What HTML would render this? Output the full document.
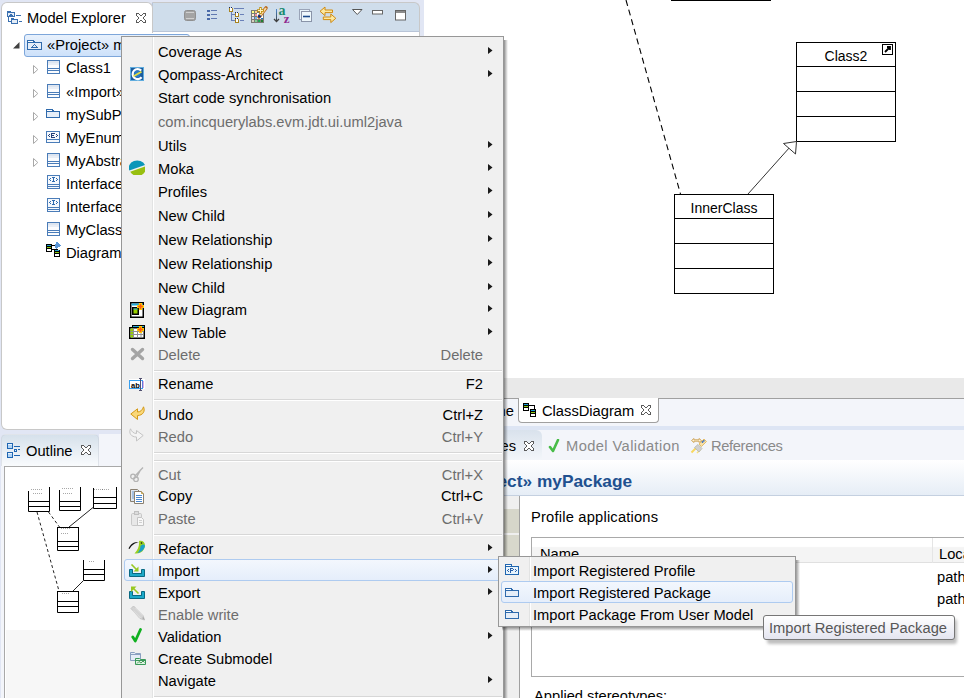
<!DOCTYPE html><html><head><meta charset="utf-8"><style>
*{margin:0;padding:0;box-sizing:border-box}
html,body{width:964px;height:698px;overflow:hidden;background:#fff;font-family:"Liberation Sans", sans-serif;font-size:14.7px}
.t{position:absolute;white-space:nowrap;line-height:17px;height:17px}
.a{position:absolute}
</style></head><body><div style="position:absolute;left:0px;top:0px;width:424px;height:698px;background:#e1e6f4"></div><div style="position:absolute;left:1px;top:31px;width:419px;height:399px;background:#fff;border:1px solid #c8c8c8;border-top:none;border-radius:0 0 0 6px"></div><div style="position:absolute;left:152px;top:2px;width:268px;height:30px;background:#cfddeb;border:1px solid #c8c8c8;border-left:1px solid #b9c5d8;border-bottom:1px solid #b9c5d8;border-radius:0 6px 0 0"></div><div style="position:absolute;left:1px;top:2px;width:152px;height:31px;background:#fff;border:1px solid #c8c8c8;border-bottom:none;border-radius:6px 6px 0 0"></div><div class="t" style="left:27px;top:10px;color:#000;">Model Explorer</div><div style="position:absolute;left:1px;top:466px;width:420px;height:232px;background:#f3f5fa"></div><div style="position:absolute;left:99px;top:434px;width:322px;height:32px;background:#f3f5fa"></div><div style="position:absolute;left:1px;top:434px;width:98px;height:32px;background:linear-gradient(#d6e1eb,#f9fbfd);border-radius:5px 5px 0 0;border:1px solid rgba(200,205,215,.5);border-bottom:none"></div><div class="t" style="left:26px;top:443px;color:#000;">Outline</div><div style="position:absolute;left:4px;top:466px;width:417px;height:232px;background:#fff;border:1px solid #a9a9a9;border-right:none;border-bottom:none"></div><div style="position:absolute;left:6px;top:630px;width:415px;height:68px;background:#f7f7f7"></div><div style="position:absolute;left:424px;top:378px;width:540px;height:20px;background:#e9e9e9"></div><div style="position:absolute;left:504px;top:398px;width:460px;height:1px;background:#a0a0a0"></div><div style="position:absolute;left:504px;top:399px;width:460px;height:27px;background:#f3f5fa"></div><div style="position:absolute;left:504px;top:426px;width:460px;height:4px;background:#dde5f4"></div><div style="position:absolute;left:504px;top:430px;width:460px;height:30px;background:#f3f5fa"></div><div style="position:absolute;left:504px;top:460px;width:460px;height:36px;background:linear-gradient(#fff,#e6edf6);border-bottom:1px solid #c4d0e0"></div><div style="position:absolute;left:504px;top:496px;width:460px;height:202px;background:#fff"></div><div style="position:absolute;left:24px;top:34px;width:166px;height:23px;background:linear-gradient(#e8f1fc,#cde1fa);border:1px solid #7da6da;border-radius:3px"></div><svg class="a" style="left:13px;top:42px" width="7" height="7"><path d="M6.5 0V6.5H0Z" fill="#404040"/></svg><svg class="a" style="left:27px;top:40px" width="15" height="10" shape-rendering="crispEdges"><rect x="0" y="0" width="7" height="1" fill="#2f6aac"/><rect x="0" y="1" width="1" height="1" fill="#2f6aac"/><rect x="1" y="1" width="5" height="1" fill="#ffffff"/><rect x="6" y="1" width="2" height="1" fill="#2f6aac"/><rect x="0" y="2" width="15" height="1" fill="#2f6aac"/><rect x="0" y="3" width="1" height="1" fill="#2f6aac"/><rect x="1" y="3" width="13" height="1" fill="#e6eef8"/><rect x="14" y="3" width="1" height="1" fill="#2f6aac"/><rect x="0" y="4" width="1" height="1" fill="#2f6aac"/><rect x="1" y="4" width="6" height="1" fill="#e6eef8"/><rect x="7" y="4" width="1" height="1" fill="#2f6aac"/><rect x="8" y="4" width="6" height="1" fill="#e6eef8"/><rect x="14" y="4" width="1" height="1" fill="#2f6aac"/><rect x="0" y="5" width="1" height="1" fill="#2f6aac"/><rect x="1" y="5" width="5" height="1" fill="#e6eef8"/><rect x="6" y="5" width="1" height="1" fill="#2f6aac"/><rect x="7" y="5" width="1" height="1" fill="#e6eef8"/><rect x="8" y="5" width="1" height="1" fill="#2f6aac"/><rect x="9" y="5" width="5" height="1" fill="#e6eef8"/><rect x="14" y="5" width="1" height="1" fill="#2f6aac"/><rect x="0" y="6" width="1" height="1" fill="#2f6aac"/><rect x="1" y="6" width="4" height="1" fill="#e6eef8"/><rect x="5" y="6" width="1" height="1" fill="#2f6aac"/><rect x="6" y="6" width="3" height="1" fill="#e6eef8"/><rect x="9" y="6" width="1" height="1" fill="#2f6aac"/><rect x="10" y="6" width="4" height="1" fill="#e6eef8"/><rect x="14" y="6" width="1" height="1" fill="#2f6aac"/><rect x="0" y="7" width="1" height="1" fill="#2f6aac"/><rect x="1" y="7" width="3" height="1" fill="#e6eef8"/><rect x="4" y="7" width="7" height="1" fill="#2f6aac"/><rect x="11" y="7" width="3" height="1" fill="#e6eef8"/><rect x="14" y="7" width="1" height="1" fill="#2f6aac"/><rect x="0" y="8" width="1" height="1" fill="#2f6aac"/><rect x="1" y="8" width="13" height="1" fill="#e6eef8"/><rect x="14" y="8" width="1" height="1" fill="#2f6aac"/><rect x="0" y="9" width="15" height="1" fill="#2f6aac"/></svg><div class="t" style="left:47px;top:37px;color:#000;">&laquo;Project&raquo; myPackage</div><svg class="a" style="left:33px;top:65px" width="6" height="9"><path d="M0.5 0.5L4.8 4.5L0.5 8.5Z" fill="#fff" stroke="#a8a8a8"/></svg><svg class="a" style="left:47px;top:60px" width="13" height="14" shape-rendering="crispEdges"><rect x="0" y="0" width="13" height="1" fill="#4a7cb8"/><rect x="0" y="1" width="1" height="1" fill="#4a7cb8"/><rect x="1" y="1" width="11" height="1" fill="#dde5f0"/><rect x="12" y="1" width="1" height="1" fill="#4a7cb8"/><rect x="0" y="2" width="1" height="1" fill="#4a7cb8"/><rect x="1" y="2" width="11" height="1" fill="#dde5f0"/><rect x="12" y="2" width="1" height="1" fill="#4a7cb8"/><rect x="0" y="3" width="1" height="1" fill="#4a7cb8"/><rect x="1" y="3" width="11" height="1" fill="#e9eef6"/><rect x="12" y="3" width="1" height="1" fill="#4a7cb8"/><rect x="0" y="4" width="1" height="1" fill="#4a7cb8"/><rect x="1" y="4" width="11" height="1" fill="#e9eef6"/><rect x="12" y="4" width="1" height="1" fill="#4a7cb8"/><rect x="0" y="5" width="1" height="1" fill="#4a7cb8"/><rect x="1" y="5" width="11" height="1" fill="#fbfcfe"/><rect x="12" y="5" width="1" height="1" fill="#4a7cb8"/><rect x="0" y="6" width="1" height="1" fill="#4a7cb8"/><rect x="1" y="6" width="11" height="1" fill="#fbfcfe"/><rect x="12" y="6" width="1" height="1" fill="#4a7cb8"/><rect x="0" y="7" width="1" height="1" fill="#4a7cb8"/><rect x="1" y="7" width="11" height="1" fill="#fbfcfe"/><rect x="12" y="7" width="1" height="1" fill="#4a7cb8"/><rect x="0" y="8" width="13" height="1" fill="#4a7cb8"/><rect x="0" y="9" width="1" height="1" fill="#4a7cb8"/><rect x="1" y="9" width="11" height="1" fill="#fbfcfe"/><rect x="12" y="9" width="1" height="1" fill="#4a7cb8"/><rect x="0" y="10" width="13" height="1" fill="#4a7cb8"/><rect x="0" y="11" width="1" height="1" fill="#4a7cb8"/><rect x="1" y="11" width="11" height="1" fill="#fbfcfe"/><rect x="12" y="11" width="1" height="1" fill="#4a7cb8"/><rect x="0" y="12" width="1" height="1" fill="#4a7cb8"/><rect x="1" y="12" width="11" height="1" fill="#fbfcfe"/><rect x="12" y="12" width="1" height="1" fill="#4a7cb8"/><rect x="0" y="13" width="13" height="1" fill="#4a7cb8"/></svg><div class="t" style="left:66px;top:60px;color:#000;">Class1</div><svg class="a" style="left:33px;top:89px" width="6" height="9"><path d="M0.5 0.5L4.8 4.5L0.5 8.5Z" fill="#fff" stroke="#a8a8a8"/></svg><svg class="a" style="left:47px;top:84px" width="13" height="14" shape-rendering="crispEdges"><rect x="0" y="0" width="13" height="1" fill="#4a7cb8"/><rect x="0" y="1" width="1" height="1" fill="#4a7cb8"/><rect x="1" y="1" width="11" height="1" fill="#dde5f0"/><rect x="12" y="1" width="1" height="1" fill="#4a7cb8"/><rect x="0" y="2" width="1" height="1" fill="#4a7cb8"/><rect x="1" y="2" width="11" height="1" fill="#dde5f0"/><rect x="12" y="2" width="1" height="1" fill="#4a7cb8"/><rect x="0" y="3" width="1" height="1" fill="#4a7cb8"/><rect x="1" y="3" width="11" height="1" fill="#e9eef6"/><rect x="12" y="3" width="1" height="1" fill="#4a7cb8"/><rect x="0" y="4" width="1" height="1" fill="#4a7cb8"/><rect x="1" y="4" width="11" height="1" fill="#e9eef6"/><rect x="12" y="4" width="1" height="1" fill="#4a7cb8"/><rect x="0" y="5" width="1" height="1" fill="#4a7cb8"/><rect x="1" y="5" width="11" height="1" fill="#fbfcfe"/><rect x="12" y="5" width="1" height="1" fill="#4a7cb8"/><rect x="0" y="6" width="1" height="1" fill="#4a7cb8"/><rect x="1" y="6" width="11" height="1" fill="#fbfcfe"/><rect x="12" y="6" width="1" height="1" fill="#4a7cb8"/><rect x="0" y="7" width="1" height="1" fill="#4a7cb8"/><rect x="1" y="7" width="11" height="1" fill="#fbfcfe"/><rect x="12" y="7" width="1" height="1" fill="#4a7cb8"/><rect x="0" y="8" width="13" height="1" fill="#4a7cb8"/><rect x="0" y="9" width="1" height="1" fill="#4a7cb8"/><rect x="1" y="9" width="11" height="1" fill="#fbfcfe"/><rect x="12" y="9" width="1" height="1" fill="#4a7cb8"/><rect x="0" y="10" width="13" height="1" fill="#4a7cb8"/><rect x="0" y="11" width="1" height="1" fill="#4a7cb8"/><rect x="1" y="11" width="11" height="1" fill="#fbfcfe"/><rect x="12" y="11" width="1" height="1" fill="#4a7cb8"/><rect x="0" y="12" width="1" height="1" fill="#4a7cb8"/><rect x="1" y="12" width="11" height="1" fill="#fbfcfe"/><rect x="12" y="12" width="1" height="1" fill="#4a7cb8"/><rect x="0" y="13" width="13" height="1" fill="#4a7cb8"/></svg><div class="t" style="left:66px;top:84px;color:#000;">&laquo;Import&raquo; Class</div><svg class="a" style="left:33px;top:112px" width="6" height="9"><path d="M0.5 0.5L4.8 4.5L0.5 8.5Z" fill="#fff" stroke="#a8a8a8"/></svg><svg class="a" style="left:46px;top:109px" width="14" height="9" shape-rendering="crispEdges"><rect x="0" y="0" width="7" height="1" fill="#2f6aac"/><rect x="0" y="1" width="1" height="1" fill="#2f6aac"/><rect x="1" y="1" width="5" height="1" fill="#ffffff"/><rect x="6" y="1" width="2" height="1" fill="#2f6aac"/><rect x="0" y="2" width="14" height="1" fill="#2f6aac"/><rect x="0" y="3" width="1" height="1" fill="#2f6aac"/><rect x="1" y="3" width="12" height="1" fill="#e6eef8"/><rect x="13" y="3" width="1" height="1" fill="#2f6aac"/><rect x="0" y="4" width="1" height="1" fill="#2f6aac"/><rect x="1" y="4" width="12" height="1" fill="#e6eef8"/><rect x="13" y="4" width="1" height="1" fill="#2f6aac"/><rect x="0" y="5" width="1" height="1" fill="#2f6aac"/><rect x="1" y="5" width="12" height="1" fill="#e6eef8"/><rect x="13" y="5" width="1" height="1" fill="#2f6aac"/><rect x="0" y="6" width="1" height="1" fill="#2f6aac"/><rect x="1" y="6" width="12" height="1" fill="#e6eef8"/><rect x="13" y="6" width="1" height="1" fill="#2f6aac"/><rect x="0" y="7" width="1" height="1" fill="#2f6aac"/><rect x="1" y="7" width="12" height="1" fill="#e6eef8"/><rect x="13" y="7" width="1" height="1" fill="#2f6aac"/><rect x="0" y="8" width="14" height="1" fill="#2f6aac"/></svg><div class="t" style="left:66px;top:107px;color:#000;">mySubPackage</div><svg class="a" style="left:33px;top:135px" width="6" height="9"><path d="M0.5 0.5L4.8 4.5L0.5 8.5Z" fill="#fff" stroke="#a8a8a8"/></svg><svg class="a" style="left:46px;top:131px" width="14" height="12" shape-rendering="crispEdges"><rect x="0" y="0" width="14" height="1" fill="#4a7cb8"/><rect x="0" y="1" width="1" height="1" fill="#4a7cb8"/><rect x="1" y="1" width="12" height="1" fill="#f6f9fd"/><rect x="13" y="1" width="1" height="1" fill="#4a7cb8"/><rect x="0" y="2" width="1" height="1" fill="#4a7cb8"/><rect x="1" y="2" width="4" height="1" fill="#f6f9fd"/><rect x="5" y="2" width="4" height="1" fill="#233f78"/><rect x="9" y="2" width="4" height="1" fill="#f6f9fd"/><rect x="13" y="2" width="1" height="1" fill="#4a7cb8"/><rect x="0" y="3" width="1" height="1" fill="#4a7cb8"/><rect x="1" y="3" width="2" height="1" fill="#f6f9fd"/><rect x="3" y="3" width="1" height="1" fill="#233f78"/><rect x="4" y="3" width="1" height="1" fill="#f6f9fd"/><rect x="5" y="3" width="1" height="1" fill="#233f78"/><rect x="6" y="3" width="4" height="1" fill="#f6f9fd"/><rect x="10" y="3" width="1" height="1" fill="#233f78"/><rect x="11" y="3" width="2" height="1" fill="#f6f9fd"/><rect x="13" y="3" width="1" height="1" fill="#4a7cb8"/><rect x="0" y="4" width="1" height="1" fill="#4a7cb8"/><rect x="1" y="4" width="1" height="1" fill="#f6f9fd"/><rect x="2" y="4" width="1" height="1" fill="#233f78"/><rect x="3" y="4" width="2" height="1" fill="#f6f9fd"/><rect x="5" y="4" width="3" height="1" fill="#233f78"/><rect x="8" y="4" width="3" height="1" fill="#f6f9fd"/><rect x="11" y="4" width="1" height="1" fill="#233f78"/><rect x="12" y="4" width="1" height="1" fill="#f6f9fd"/><rect x="13" y="4" width="1" height="1" fill="#4a7cb8"/><rect x="0" y="5" width="1" height="1" fill="#4a7cb8"/><rect x="1" y="5" width="2" height="1" fill="#f6f9fd"/><rect x="3" y="5" width="1" height="1" fill="#233f78"/><rect x="4" y="5" width="1" height="1" fill="#f6f9fd"/><rect x="5" y="5" width="1" height="1" fill="#233f78"/><rect x="6" y="5" width="4" height="1" fill="#f6f9fd"/><rect x="10" y="5" width="1" height="1" fill="#233f78"/><rect x="11" y="5" width="2" height="1" fill="#f6f9fd"/><rect x="13" y="5" width="1" height="1" fill="#4a7cb8"/><rect x="0" y="6" width="1" height="1" fill="#4a7cb8"/><rect x="1" y="6" width="4" height="1" fill="#f6f9fd"/><rect x="5" y="6" width="4" height="1" fill="#233f78"/><rect x="9" y="6" width="4" height="1" fill="#f6f9fd"/><rect x="13" y="6" width="1" height="1" fill="#4a7cb8"/><rect x="0" y="7" width="1" height="1" fill="#4a7cb8"/><rect x="1" y="7" width="12" height="1" fill="#f6f9fd"/><rect x="13" y="7" width="1" height="1" fill="#4a7cb8"/><rect x="0" y="8" width="14" height="1" fill="#4a7cb8"/><rect x="0" y="9" width="1" height="1" fill="#4a7cb8"/><rect x="1" y="9" width="12" height="1" fill="#f6f9fd"/><rect x="13" y="9" width="1" height="1" fill="#4a7cb8"/><rect x="0" y="10" width="1" height="1" fill="#4a7cb8"/><rect x="1" y="10" width="12" height="1" fill="#f6f9fd"/><rect x="13" y="10" width="1" height="1" fill="#4a7cb8"/><rect x="0" y="11" width="14" height="1" fill="#4a7cb8"/></svg><div class="t" style="left:66px;top:130px;color:#000;">MyEnumeration</div><svg class="a" style="left:33px;top:158px" width="6" height="9"><path d="M0.5 0.5L4.8 4.5L0.5 8.5Z" fill="#fff" stroke="#a8a8a8"/></svg><svg class="a" style="left:47px;top:153px" width="13" height="14" shape-rendering="crispEdges"><rect x="0" y="0" width="13" height="1" fill="#4a7cb8"/><rect x="0" y="1" width="1" height="1" fill="#4a7cb8"/><rect x="1" y="1" width="11" height="1" fill="#dde5f0"/><rect x="12" y="1" width="1" height="1" fill="#4a7cb8"/><rect x="0" y="2" width="1" height="1" fill="#4a7cb8"/><rect x="1" y="2" width="11" height="1" fill="#dde5f0"/><rect x="12" y="2" width="1" height="1" fill="#4a7cb8"/><rect x="0" y="3" width="1" height="1" fill="#4a7cb8"/><rect x="1" y="3" width="11" height="1" fill="#e9eef6"/><rect x="12" y="3" width="1" height="1" fill="#4a7cb8"/><rect x="0" y="4" width="1" height="1" fill="#4a7cb8"/><rect x="1" y="4" width="11" height="1" fill="#e9eef6"/><rect x="12" y="4" width="1" height="1" fill="#4a7cb8"/><rect x="0" y="5" width="1" height="1" fill="#4a7cb8"/><rect x="1" y="5" width="11" height="1" fill="#fbfcfe"/><rect x="12" y="5" width="1" height="1" fill="#4a7cb8"/><rect x="0" y="6" width="1" height="1" fill="#4a7cb8"/><rect x="1" y="6" width="11" height="1" fill="#fbfcfe"/><rect x="12" y="6" width="1" height="1" fill="#4a7cb8"/><rect x="0" y="7" width="1" height="1" fill="#4a7cb8"/><rect x="1" y="7" width="11" height="1" fill="#fbfcfe"/><rect x="12" y="7" width="1" height="1" fill="#4a7cb8"/><rect x="0" y="8" width="13" height="1" fill="#4a7cb8"/><rect x="0" y="9" width="1" height="1" fill="#4a7cb8"/><rect x="1" y="9" width="11" height="1" fill="#fbfcfe"/><rect x="12" y="9" width="1" height="1" fill="#4a7cb8"/><rect x="0" y="10" width="13" height="1" fill="#4a7cb8"/><rect x="0" y="11" width="1" height="1" fill="#4a7cb8"/><rect x="1" y="11" width="11" height="1" fill="#fbfcfe"/><rect x="12" y="11" width="1" height="1" fill="#4a7cb8"/><rect x="0" y="12" width="1" height="1" fill="#4a7cb8"/><rect x="1" y="12" width="11" height="1" fill="#fbfcfe"/><rect x="12" y="12" width="1" height="1" fill="#4a7cb8"/><rect x="0" y="13" width="13" height="1" fill="#4a7cb8"/></svg><div class="t" style="left:66px;top:153px;color:#000;">MyAbstractClass</div><svg class="a" style="left:47px;top:175px" width="13" height="14" shape-rendering="crispEdges"><rect x="0" y="0" width="13" height="1" fill="#4a7cb8"/><rect x="0" y="1" width="1" height="1" fill="#4a7cb8"/><rect x="1" y="1" width="11" height="1" fill="#f6f9fd"/><rect x="12" y="1" width="1" height="1" fill="#4a7cb8"/><rect x="0" y="2" width="1" height="1" fill="#4a7cb8"/><rect x="1" y="2" width="4" height="1" fill="#f6f9fd"/><rect x="5" y="2" width="3" height="1" fill="#2d6ab0"/><rect x="8" y="2" width="4" height="1" fill="#f6f9fd"/><rect x="12" y="2" width="1" height="1" fill="#4a7cb8"/><rect x="0" y="3" width="1" height="1" fill="#4a7cb8"/><rect x="1" y="3" width="2" height="1" fill="#f6f9fd"/><rect x="3" y="3" width="1" height="1" fill="#2d6ab0"/><rect x="4" y="3" width="2" height="1" fill="#f6f9fd"/><rect x="6" y="3" width="1" height="1" fill="#2d6ab0"/><rect x="7" y="3" width="2" height="1" fill="#f6f9fd"/><rect x="9" y="3" width="1" height="1" fill="#2d6ab0"/><rect x="10" y="3" width="2" height="1" fill="#f6f9fd"/><rect x="12" y="3" width="1" height="1" fill="#4a7cb8"/><rect x="0" y="4" width="1" height="1" fill="#4a7cb8"/><rect x="1" y="4" width="1" height="1" fill="#f6f9fd"/><rect x="2" y="4" width="1" height="1" fill="#2d6ab0"/><rect x="3" y="4" width="3" height="1" fill="#f6f9fd"/><rect x="6" y="4" width="1" height="1" fill="#2d6ab0"/><rect x="7" y="4" width="3" height="1" fill="#f6f9fd"/><rect x="10" y="4" width="1" height="1" fill="#2d6ab0"/><rect x="11" y="4" width="1" height="1" fill="#f6f9fd"/><rect x="12" y="4" width="1" height="1" fill="#4a7cb8"/><rect x="0" y="5" width="1" height="1" fill="#4a7cb8"/><rect x="1" y="5" width="2" height="1" fill="#f6f9fd"/><rect x="3" y="5" width="1" height="1" fill="#2d6ab0"/><rect x="4" y="5" width="2" height="1" fill="#f6f9fd"/><rect x="6" y="5" width="1" height="1" fill="#2d6ab0"/><rect x="7" y="5" width="2" height="1" fill="#f6f9fd"/><rect x="9" y="5" width="1" height="1" fill="#2d6ab0"/><rect x="10" y="5" width="2" height="1" fill="#f6f9fd"/><rect x="12" y="5" width="1" height="1" fill="#4a7cb8"/><rect x="0" y="6" width="1" height="1" fill="#4a7cb8"/><rect x="1" y="6" width="4" height="1" fill="#f6f9fd"/><rect x="5" y="6" width="3" height="1" fill="#2d6ab0"/><rect x="8" y="6" width="4" height="1" fill="#f6f9fd"/><rect x="12" y="6" width="1" height="1" fill="#4a7cb8"/><rect x="0" y="7" width="1" height="1" fill="#4a7cb8"/><rect x="1" y="7" width="11" height="1" fill="#f6f9fd"/><rect x="12" y="7" width="1" height="1" fill="#4a7cb8"/><rect x="0" y="8" width="1" height="1" fill="#4a7cb8"/><rect x="1" y="8" width="11" height="1" fill="#f6f9fd"/><rect x="12" y="8" width="1" height="1" fill="#4a7cb8"/><rect x="0" y="9" width="13" height="1" fill="#4a7cb8"/><rect x="0" y="10" width="1" height="1" fill="#4a7cb8"/><rect x="1" y="10" width="11" height="1" fill="#f6f9fd"/><rect x="12" y="10" width="1" height="1" fill="#4a7cb8"/><rect x="0" y="11" width="13" height="1" fill="#4a7cb8"/><rect x="0" y="12" width="1" height="1" fill="#4a7cb8"/><rect x="1" y="12" width="11" height="1" fill="#f6f9fd"/><rect x="12" y="12" width="1" height="1" fill="#4a7cb8"/><rect x="0" y="13" width="13" height="1" fill="#4a7cb8"/></svg><div class="t" style="left:66px;top:176px;color:#000;">Interface1</div><svg class="a" style="left:47px;top:198px" width="13" height="14" shape-rendering="crispEdges"><rect x="0" y="0" width="13" height="1" fill="#4a7cb8"/><rect x="0" y="1" width="1" height="1" fill="#4a7cb8"/><rect x="1" y="1" width="11" height="1" fill="#f6f9fd"/><rect x="12" y="1" width="1" height="1" fill="#4a7cb8"/><rect x="0" y="2" width="1" height="1" fill="#4a7cb8"/><rect x="1" y="2" width="4" height="1" fill="#f6f9fd"/><rect x="5" y="2" width="3" height="1" fill="#2d6ab0"/><rect x="8" y="2" width="4" height="1" fill="#f6f9fd"/><rect x="12" y="2" width="1" height="1" fill="#4a7cb8"/><rect x="0" y="3" width="1" height="1" fill="#4a7cb8"/><rect x="1" y="3" width="2" height="1" fill="#f6f9fd"/><rect x="3" y="3" width="1" height="1" fill="#2d6ab0"/><rect x="4" y="3" width="2" height="1" fill="#f6f9fd"/><rect x="6" y="3" width="1" height="1" fill="#2d6ab0"/><rect x="7" y="3" width="2" height="1" fill="#f6f9fd"/><rect x="9" y="3" width="1" height="1" fill="#2d6ab0"/><rect x="10" y="3" width="2" height="1" fill="#f6f9fd"/><rect x="12" y="3" width="1" height="1" fill="#4a7cb8"/><rect x="0" y="4" width="1" height="1" fill="#4a7cb8"/><rect x="1" y="4" width="1" height="1" fill="#f6f9fd"/><rect x="2" y="4" width="1" height="1" fill="#2d6ab0"/><rect x="3" y="4" width="3" height="1" fill="#f6f9fd"/><rect x="6" y="4" width="1" height="1" fill="#2d6ab0"/><rect x="7" y="4" width="3" height="1" fill="#f6f9fd"/><rect x="10" y="4" width="1" height="1" fill="#2d6ab0"/><rect x="11" y="4" width="1" height="1" fill="#f6f9fd"/><rect x="12" y="4" width="1" height="1" fill="#4a7cb8"/><rect x="0" y="5" width="1" height="1" fill="#4a7cb8"/><rect x="1" y="5" width="2" height="1" fill="#f6f9fd"/><rect x="3" y="5" width="1" height="1" fill="#2d6ab0"/><rect x="4" y="5" width="2" height="1" fill="#f6f9fd"/><rect x="6" y="5" width="1" height="1" fill="#2d6ab0"/><rect x="7" y="5" width="2" height="1" fill="#f6f9fd"/><rect x="9" y="5" width="1" height="1" fill="#2d6ab0"/><rect x="10" y="5" width="2" height="1" fill="#f6f9fd"/><rect x="12" y="5" width="1" height="1" fill="#4a7cb8"/><rect x="0" y="6" width="1" height="1" fill="#4a7cb8"/><rect x="1" y="6" width="4" height="1" fill="#f6f9fd"/><rect x="5" y="6" width="3" height="1" fill="#2d6ab0"/><rect x="8" y="6" width="4" height="1" fill="#f6f9fd"/><rect x="12" y="6" width="1" height="1" fill="#4a7cb8"/><rect x="0" y="7" width="1" height="1" fill="#4a7cb8"/><rect x="1" y="7" width="11" height="1" fill="#f6f9fd"/><rect x="12" y="7" width="1" height="1" fill="#4a7cb8"/><rect x="0" y="8" width="1" height="1" fill="#4a7cb8"/><rect x="1" y="8" width="11" height="1" fill="#f6f9fd"/><rect x="12" y="8" width="1" height="1" fill="#4a7cb8"/><rect x="0" y="9" width="13" height="1" fill="#4a7cb8"/><rect x="0" y="10" width="1" height="1" fill="#4a7cb8"/><rect x="1" y="10" width="11" height="1" fill="#f6f9fd"/><rect x="12" y="10" width="1" height="1" fill="#4a7cb8"/><rect x="0" y="11" width="13" height="1" fill="#4a7cb8"/><rect x="0" y="12" width="1" height="1" fill="#4a7cb8"/><rect x="1" y="12" width="11" height="1" fill="#f6f9fd"/><rect x="12" y="12" width="1" height="1" fill="#4a7cb8"/><rect x="0" y="13" width="13" height="1" fill="#4a7cb8"/></svg><div class="t" style="left:66px;top:199px;color:#000;">Interface2</div><svg class="a" style="left:47px;top:222px" width="13" height="14" shape-rendering="crispEdges"><rect x="0" y="0" width="13" height="1" fill="#4a7cb8"/><rect x="0" y="1" width="1" height="1" fill="#4a7cb8"/><rect x="1" y="1" width="11" height="1" fill="#dde5f0"/><rect x="12" y="1" width="1" height="1" fill="#4a7cb8"/><rect x="0" y="2" width="1" height="1" fill="#4a7cb8"/><rect x="1" y="2" width="11" height="1" fill="#dde5f0"/><rect x="12" y="2" width="1" height="1" fill="#4a7cb8"/><rect x="0" y="3" width="1" height="1" fill="#4a7cb8"/><rect x="1" y="3" width="11" height="1" fill="#e9eef6"/><rect x="12" y="3" width="1" height="1" fill="#4a7cb8"/><rect x="0" y="4" width="1" height="1" fill="#4a7cb8"/><rect x="1" y="4" width="11" height="1" fill="#e9eef6"/><rect x="12" y="4" width="1" height="1" fill="#4a7cb8"/><rect x="0" y="5" width="1" height="1" fill="#4a7cb8"/><rect x="1" y="5" width="11" height="1" fill="#fbfcfe"/><rect x="12" y="5" width="1" height="1" fill="#4a7cb8"/><rect x="0" y="6" width="1" height="1" fill="#4a7cb8"/><rect x="1" y="6" width="11" height="1" fill="#fbfcfe"/><rect x="12" y="6" width="1" height="1" fill="#4a7cb8"/><rect x="0" y="7" width="1" height="1" fill="#4a7cb8"/><rect x="1" y="7" width="11" height="1" fill="#fbfcfe"/><rect x="12" y="7" width="1" height="1" fill="#4a7cb8"/><rect x="0" y="8" width="13" height="1" fill="#4a7cb8"/><rect x="0" y="9" width="1" height="1" fill="#4a7cb8"/><rect x="1" y="9" width="11" height="1" fill="#fbfcfe"/><rect x="12" y="9" width="1" height="1" fill="#4a7cb8"/><rect x="0" y="10" width="13" height="1" fill="#4a7cb8"/><rect x="0" y="11" width="1" height="1" fill="#4a7cb8"/><rect x="1" y="11" width="11" height="1" fill="#fbfcfe"/><rect x="12" y="11" width="1" height="1" fill="#4a7cb8"/><rect x="0" y="12" width="1" height="1" fill="#4a7cb8"/><rect x="1" y="12" width="11" height="1" fill="#fbfcfe"/><rect x="12" y="12" width="1" height="1" fill="#4a7cb8"/><rect x="0" y="13" width="13" height="1" fill="#4a7cb8"/></svg><div class="t" style="left:66px;top:222px;color:#000;">MyClass</div><svg class="a" style="left:46px;top:242px" width="16" height="15" shape-rendering="crispEdges"><rect x="10" y="0" width="2" height="1" fill="#5a96d8"/><rect x="10" y="1" width="3" height="1" fill="#5a96d8"/><rect x="0" y="2" width="6" height="1" fill="#000"/><rect x="9" y="2" width="5" height="1" fill="#5a96d8"/><rect x="0" y="3" width="1" height="1" fill="#000"/><rect x="1" y="3" width="4" height="1" fill="#1aa0d0"/><rect x="5" y="3" width="4" height="1" fill="#000"/><rect x="9" y="3" width="6" height="1" fill="#5a96d8"/><rect x="0" y="4" width="6" height="1" fill="#000"/><rect x="9" y="4" width="5" height="1" fill="#5a96d8"/><rect x="0" y="5" width="1" height="1" fill="#000"/><rect x="1" y="5" width="4" height="1" fill="#8ccc10"/><rect x="5" y="5" width="1" height="1" fill="#000"/><rect x="9" y="5" width="3" height="1" fill="#5a96d8"/><rect x="0" y="6" width="6" height="1" fill="#000"/><rect x="10" y="6" width="1" height="1" fill="#5a96d8"/><rect x="0" y="7" width="1" height="1" fill="#000"/><rect x="1" y="7" width="4" height="1" fill="#fff"/><rect x="5" y="7" width="7" height="1" fill="#000"/><rect x="0" y="8" width="1" height="1" fill="#000"/><rect x="1" y="8" width="4" height="1" fill="#fff"/><rect x="5" y="8" width="1" height="1" fill="#000"/><rect x="8" y="8" width="1" height="1" fill="#000"/><rect x="9" y="8" width="4" height="1" fill="#1aa0d0"/><rect x="13" y="8" width="1" height="1" fill="#000"/><rect x="0" y="9" width="6" height="1" fill="#000"/><rect x="8" y="9" width="6" height="1" fill="#000"/><rect x="8" y="10" width="1" height="1" fill="#000"/><rect x="9" y="10" width="4" height="1" fill="#8ccc10"/><rect x="13" y="10" width="1" height="1" fill="#000"/><rect x="8" y="11" width="6" height="1" fill="#000"/><rect x="8" y="12" width="1" height="1" fill="#000"/><rect x="9" y="12" width="4" height="1" fill="#fff"/><rect x="13" y="12" width="1" height="1" fill="#000"/><rect x="8" y="13" width="1" height="1" fill="#000"/><rect x="9" y="13" width="4" height="1" fill="#fff"/><rect x="13" y="13" width="1" height="1" fill="#000"/><rect x="8" y="14" width="6" height="1" fill="#000"/></svg><div class="t" style="left:66px;top:245px;color:#000;">Diagram</div><svg class="a" style="left:5px;top:11px" width="17" height="13" shape-rendering="crispEdges"><rect x="2" y="0" width="4" height="1" fill="#3a70b0"/><rect x="2" y="1" width="8" height="1" fill="#3a70b0"/><rect x="2" y="2" width="1" height="1" fill="#3a70b0"/><rect x="3" y="2" width="6" height="1" fill="#e4edf7"/><rect x="9" y="2" width="1" height="1" fill="#3a70b0"/><rect x="2" y="3" width="1" height="1" fill="#3a70b0"/><rect x="3" y="3" width="2" height="1" fill="#e4edf7"/><rect x="5" y="3" width="2" height="1" fill="#3a70b0"/><rect x="7" y="3" width="2" height="1" fill="#e4edf7"/><rect x="9" y="3" width="1" height="1" fill="#3a70b0"/><rect x="2" y="4" width="1" height="1" fill="#3a70b0"/><rect x="3" y="4" width="1" height="1" fill="#e4edf7"/><rect x="4" y="4" width="4" height="1" fill="#3a70b0"/><rect x="8" y="4" width="1" height="1" fill="#e4edf7"/><rect x="9" y="4" width="1" height="1" fill="#3a70b0"/><rect x="11" y="4" width="5" height="1" fill="#3a70b0"/><rect x="2" y="5" width="8" height="1" fill="#3a70b0"/><rect x="3" y="6" width="1" height="1" fill="#3a70b0"/><rect x="3" y="7" width="1" height="1" fill="#3a70b0"/><rect x="6" y="7" width="3" height="1" fill="#3a70b0"/><rect x="3" y="8" width="1" height="1" fill="#3a70b0"/><rect x="6" y="8" width="7" height="1" fill="#3a70b0"/><rect x="3" y="9" width="1" height="1" fill="#3a70b0"/><rect x="6" y="9" width="1" height="1" fill="#3a70b0"/><rect x="7" y="9" width="5" height="1" fill="#e4edf7"/><rect x="12" y="9" width="1" height="1" fill="#3a70b0"/><rect x="3" y="10" width="4" height="1" fill="#3a70b0"/><rect x="7" y="10" width="5" height="1" fill="#e4edf7"/><rect x="12" y="10" width="1" height="1" fill="#3a70b0"/><rect x="14" y="10" width="3" height="1" fill="#3a70b0"/><rect x="6" y="11" width="1" height="1" fill="#3a70b0"/><rect x="7" y="11" width="5" height="1" fill="#e4edf7"/><rect x="12" y="11" width="1" height="1" fill="#3a70b0"/><rect x="6" y="12" width="7" height="1" fill="#3a70b0"/></svg><svg class="a" style="left:136px;top:13px" width="10" height="10" shape-rendering="crispEdges"><rect x="0" y="0" width="3" height="1" fill="#5a5a5a"/><rect x="7" y="0" width="3" height="1" fill="#5a5a5a"/><rect x="0" y="1" width="1" height="1" fill="#5a5a5a"/><rect x="1" y="1" width="2" height="1" fill="#ffffff"/><rect x="3" y="1" width="1" height="1" fill="#5a5a5a"/><rect x="6" y="1" width="1" height="1" fill="#5a5a5a"/><rect x="7" y="1" width="2" height="1" fill="#ffffff"/><rect x="9" y="1" width="1" height="1" fill="#5a5a5a"/><rect x="0" y="2" width="1" height="1" fill="#5a5a5a"/><rect x="1" y="2" width="3" height="1" fill="#ffffff"/><rect x="4" y="2" width="2" height="1" fill="#5a5a5a"/><rect x="6" y="2" width="3" height="1" fill="#ffffff"/><rect x="9" y="2" width="1" height="1" fill="#5a5a5a"/><rect x="1" y="3" width="1" height="1" fill="#5a5a5a"/><rect x="2" y="3" width="6" height="1" fill="#ffffff"/><rect x="8" y="3" width="1" height="1" fill="#5a5a5a"/><rect x="2" y="4" width="1" height="1" fill="#5a5a5a"/><rect x="3" y="4" width="4" height="1" fill="#ffffff"/><rect x="7" y="4" width="1" height="1" fill="#5a5a5a"/><rect x="2" y="5" width="1" height="1" fill="#5a5a5a"/><rect x="3" y="5" width="4" height="1" fill="#ffffff"/><rect x="7" y="5" width="1" height="1" fill="#5a5a5a"/><rect x="1" y="6" width="1" height="1" fill="#5a5a5a"/><rect x="2" y="6" width="6" height="1" fill="#ffffff"/><rect x="8" y="6" width="1" height="1" fill="#5a5a5a"/><rect x="0" y="7" width="1" height="1" fill="#5a5a5a"/><rect x="1" y="7" width="3" height="1" fill="#ffffff"/><rect x="4" y="7" width="2" height="1" fill="#5a5a5a"/><rect x="6" y="7" width="3" height="1" fill="#ffffff"/><rect x="9" y="7" width="1" height="1" fill="#5a5a5a"/><rect x="0" y="8" width="1" height="1" fill="#5a5a5a"/><rect x="1" y="8" width="2" height="1" fill="#ffffff"/><rect x="3" y="8" width="1" height="1" fill="#5a5a5a"/><rect x="6" y="8" width="1" height="1" fill="#5a5a5a"/><rect x="7" y="8" width="2" height="1" fill="#ffffff"/><rect x="9" y="8" width="1" height="1" fill="#5a5a5a"/><rect x="0" y="9" width="3" height="1" fill="#5a5a5a"/><rect x="7" y="9" width="3" height="1" fill="#5a5a5a"/></svg><svg class="a" style="left:184px;top:10px" width="12" height="11"><rect x="0.5" y="0.5" width="11" height="10" rx="2" fill="#a4a4a4" stroke="#909090"/><path d="M2 2.5h8M2 8.5h8" stroke="#d0d0d0"/></svg><svg class="a" style="left:207px;top:10px" width="10" height="10" shape-rendering="crispEdges"><rect x="0" y="0" width="3" height="1" fill="#4a6aa8"/><rect x="4" y="0" width="6" height="1" fill="#6078b0"/><rect x="0" y="1" width="3" height="1" fill="#4a6aa8"/><rect x="0" y="4" width="3" height="1" fill="#4a6aa8"/><rect x="4" y="4" width="6" height="1" fill="#6078b0"/><rect x="0" y="5" width="3" height="1" fill="#4a6aa8"/><rect x="0" y="8" width="3" height="1" fill="#4a6aa8"/><rect x="4" y="8" width="6" height="1" fill="#6078b0"/><rect x="0" y="9" width="3" height="1" fill="#4a6aa8"/></svg><svg class="a" style="left:226px;top:5px" width="20" height="18" shape-rendering="crispEdges"><rect x="3" y="2" width="1" height="1" fill="#1a2a60"/><rect x="5" y="2" width="1" height="1" fill="#1a2a60"/><rect x="3" y="3" width="1" height="1" fill="#a88420"/><rect x="4" y="3" width="2" height="1" fill="#ffffff"/><rect x="6" y="3" width="1" height="1" fill="#a88420"/><rect x="8" y="3" width="10" height="1" fill="#6a80b8"/><rect x="3" y="4" width="1" height="1" fill="#a88420"/><rect x="4" y="4" width="2" height="1" fill="#ffffff"/><rect x="6" y="4" width="1" height="1" fill="#a88420"/><rect x="3" y="5" width="1" height="1" fill="#a88420"/><rect x="4" y="5" width="2" height="1" fill="#ffffff"/><rect x="6" y="5" width="1" height="1" fill="#a88420"/><rect x="3" y="6" width="4" height="1" fill="#a88420"/><rect x="5" y="7" width="1" height="1" fill="#6a80b8"/><rect x="9" y="7" width="1" height="1" fill="#1a2a60"/><rect x="11" y="7" width="1" height="1" fill="#1a2a60"/><rect x="5" y="8" width="1" height="1" fill="#6a80b8"/><rect x="9" y="8" width="1" height="1" fill="#a88420"/><rect x="10" y="8" width="2" height="1" fill="#ffffff"/><rect x="12" y="8" width="1" height="1" fill="#a88420"/><rect x="5" y="9" width="4" height="1" fill="#6a80b8"/><rect x="9" y="9" width="1" height="1" fill="#a88420"/><rect x="10" y="9" width="2" height="1" fill="#ffffff"/><rect x="12" y="9" width="1" height="1" fill="#a88420"/><rect x="14" y="9" width="4" height="1" fill="#6a80b8"/><rect x="5" y="10" width="1" height="1" fill="#6a80b8"/><rect x="9" y="10" width="1" height="1" fill="#a88420"/><rect x="10" y="10" width="2" height="1" fill="#ffffff"/><rect x="12" y="10" width="1" height="1" fill="#a88420"/><rect x="5" y="11" width="1" height="1" fill="#6a80b8"/><rect x="9" y="11" width="4" height="1" fill="#a88420"/><rect x="5" y="12" width="1" height="1" fill="#6a80b8"/><rect x="5" y="13" width="1" height="1" fill="#6a80b8"/><rect x="9" y="13" width="1" height="1" fill="#1a2a60"/><rect x="11" y="13" width="1" height="1" fill="#1a2a60"/><rect x="5" y="14" width="1" height="1" fill="#6a80b8"/><rect x="9" y="14" width="1" height="1" fill="#a88420"/><rect x="10" y="14" width="2" height="1" fill="#ffffff"/><rect x="12" y="14" width="1" height="1" fill="#a88420"/><rect x="5" y="15" width="4" height="1" fill="#6a80b8"/><rect x="9" y="15" width="1" height="1" fill="#a88420"/><rect x="10" y="15" width="2" height="1" fill="#ffffff"/><rect x="12" y="15" width="1" height="1" fill="#a88420"/><rect x="14" y="15" width="4" height="1" fill="#6a80b8"/><rect x="9" y="16" width="1" height="1" fill="#a88420"/><rect x="10" y="16" width="2" height="1" fill="#ffffff"/><rect x="12" y="16" width="1" height="1" fill="#a88420"/><rect x="9" y="17" width="4" height="1" fill="#a88420"/></svg><svg class="a" style="left:249px;top:5px" width="20" height="20" shape-rendering="crispEdges"><rect x="2" y="5" width="13" height="13" fill="#7c7c74"/><rect x="3" y="6" width="2" height="2" fill="#ffff80"/><rect x="6" y="6" width="2" height="2" fill="#ffd090"/><rect x="3" y="9" width="2" height="2" fill="#fff0d8"/><rect x="6" y="9" width="2" height="2" fill="#f090a0"/><rect x="3" y="12" width="2" height="2" fill="#d8d8ff"/><rect x="6" y="12" width="2" height="2" fill="#70b8f0"/><rect x="3" y="15" width="2" height="2" fill="#d8d0c0"/><rect x="6" y="15" width="2" height="2" fill="#80d090"/><rect x="9" y="15" width="2" height="2" fill="#20a050"/><rect x="12" y="15" width="2" height="2" fill="#208030"/><rect x="8" y="8" width="6" height="6" fill="#fff"/><rect x="12" y="13" width="2" height="1" fill="#2070c0"/></svg><svg class="a" style="left:249px;top:5px" width="20" height="20"><path d="M10 12 L17 3" stroke="#b86a20" stroke-width="3.6" stroke-linecap="round"/><path d="M10 12 L17 3" stroke="#f8d8a0" stroke-width="2"/><path d="M9.5 9.5 q-1 2.5 0 3 q2 1 3 -1.5z" fill="#0a2a80"/><path d="M11.5 2v7M8 5.5h7" stroke="#c09010" stroke-width="2.4"/><path d="M11.5 3v5M9 5.5h5" stroke="#fff4c0" stroke-width="1"/></svg><svg class="a" style="left:271px;top:5px" width="20" height="20"><defs><linearGradient id="ag" x1="0" y1="0" x2="0" y2="1"><stop offset="0" stop-color="#4a8ad0"/><stop offset="1" stop-color="#404040"/></linearGradient></defs><rect x="5" y="4" width="1" height="12" fill="url(#ag)"/><path d="M3 14L5.5 16.5L8 14" stroke="#404040" stroke-width="1.3" fill="none"/><text x="7.5" y="10" font-size="14" font-weight="bold" font-family="Liberation Serif" fill="#1a8a70">a</text><text x="12.8" y="18" font-size="13" font-weight="bold" font-family="Liberation Serif" fill="#902a90">z</text></svg><svg class="a" style="left:296px;top:5px" width="20" height="20"><rect x="3.5" y="4.5" width="10" height="10" fill="#e8f4fa" stroke="#9aa4b8"/><rect x="5.5" y="6.5" width="10" height="10" fill="#eef8fc" stroke="#8a94a8"/><path d="M7 11.5h7" stroke="#1a4a8a" stroke-width="1.6"/></svg><svg class="a" style="left:318px;top:5px" width="20" height="20"><path d="M2 6.3L7 2V5H14.5V7.6H7V10.6Z" fill="#fce8a0" stroke="#d08a10" stroke-width="1" stroke-linejoin="round"/><path d="M17.8 13.3L12.8 9V12H5.3V14.6H12.8V17.6Z" fill="#fce8a0" stroke="#d08a10" stroke-width="1" stroke-linejoin="round"/></svg><svg class="a" style="left:352px;top:9px" width="11" height="7"><path d="M0.5 0.5H10L5.25 5.5Z" fill="#fff" stroke="#555" stroke-linejoin="round"/></svg><svg class="a" style="left:372px;top:10px" width="11" height="5"><rect x="0.5" y="0.5" width="10" height="3.5" fill="#fff" stroke="#666"/></svg><svg class="a" style="left:395px;top:10px" width="11" height="11"><rect x="0.5" y="0.5" width="10" height="9.5" fill="#fff" stroke="#666"/><path d="M0.5 2h10" stroke="#666" stroke-width="1.5"/></svg><svg class="a" style="left:7px;top:443px" width="15" height="15" shape-rendering="crispEdges"><rect x="0" y="0" width="6" height="1" fill="#1f66b2"/><rect x="0" y="1" width="1" height="1" fill="#1f66b2"/><rect x="1" y="1" width="4" height="1" fill="#e8f2fc"/><rect x="5" y="1" width="1" height="1" fill="#1f66b2"/><rect x="0" y="2" width="1" height="1" fill="#1f66b2"/><rect x="1" y="2" width="4" height="1" fill="#b0d4f6"/><rect x="5" y="2" width="1" height="1" fill="#1f66b2"/><rect x="0" y="3" width="1" height="1" fill="#1f66b2"/><rect x="1" y="3" width="4" height="1" fill="#b0d4f6"/><rect x="5" y="3" width="1" height="1" fill="#1f66b2"/><rect x="7" y="3" width="6" height="1" fill="#1f66b2"/><rect x="0" y="4" width="1" height="1" fill="#1f66b2"/><rect x="1" y="4" width="4" height="1" fill="#b0d4f6"/><rect x="5" y="4" width="1" height="1" fill="#1f66b2"/><rect x="0" y="5" width="6" height="1" fill="#1f66b2"/><rect x="7" y="6" width="3" height="1" fill="#1f66b2"/><rect x="11" y="6" width="2" height="1" fill="#1f66b2"/><rect x="7" y="7" width="1" height="1" fill="#1f66b2"/><rect x="8" y="7" width="1" height="1" fill="#e8f2fc"/><rect x="9" y="7" width="1" height="1" fill="#1f66b2"/><rect x="7" y="8" width="3" height="1" fill="#1f66b2"/><rect x="0" y="9" width="6" height="1" fill="#1f66b2"/><rect x="0" y="10" width="1" height="1" fill="#1f66b2"/><rect x="1" y="10" width="4" height="1" fill="#e8f2fc"/><rect x="5" y="10" width="1" height="1" fill="#1f66b2"/><rect x="0" y="11" width="1" height="1" fill="#1f66b2"/><rect x="1" y="11" width="4" height="1" fill="#b0d4f6"/><rect x="5" y="11" width="1" height="1" fill="#1f66b2"/><rect x="0" y="12" width="1" height="1" fill="#1f66b2"/><rect x="1" y="12" width="4" height="1" fill="#b0d4f6"/><rect x="5" y="12" width="1" height="1" fill="#1f66b2"/><rect x="7" y="12" width="6" height="1" fill="#1f66b2"/><rect x="0" y="13" width="1" height="1" fill="#1f66b2"/><rect x="1" y="13" width="4" height="1" fill="#b0d4f6"/><rect x="5" y="13" width="1" height="1" fill="#1f66b2"/><rect x="0" y="14" width="6" height="1" fill="#1f66b2"/></svg><svg class="a" style="left:81px;top:445px" width="10" height="10" shape-rendering="crispEdges"><rect x="0" y="0" width="3" height="1" fill="#5a5a5a"/><rect x="7" y="0" width="3" height="1" fill="#5a5a5a"/><rect x="0" y="1" width="1" height="1" fill="#5a5a5a"/><rect x="1" y="1" width="2" height="1" fill="#ffffff"/><rect x="3" y="1" width="1" height="1" fill="#5a5a5a"/><rect x="6" y="1" width="1" height="1" fill="#5a5a5a"/><rect x="7" y="1" width="2" height="1" fill="#ffffff"/><rect x="9" y="1" width="1" height="1" fill="#5a5a5a"/><rect x="0" y="2" width="1" height="1" fill="#5a5a5a"/><rect x="1" y="2" width="3" height="1" fill="#ffffff"/><rect x="4" y="2" width="2" height="1" fill="#5a5a5a"/><rect x="6" y="2" width="3" height="1" fill="#ffffff"/><rect x="9" y="2" width="1" height="1" fill="#5a5a5a"/><rect x="1" y="3" width="1" height="1" fill="#5a5a5a"/><rect x="2" y="3" width="6" height="1" fill="#ffffff"/><rect x="8" y="3" width="1" height="1" fill="#5a5a5a"/><rect x="2" y="4" width="1" height="1" fill="#5a5a5a"/><rect x="3" y="4" width="4" height="1" fill="#ffffff"/><rect x="7" y="4" width="1" height="1" fill="#5a5a5a"/><rect x="2" y="5" width="1" height="1" fill="#5a5a5a"/><rect x="3" y="5" width="4" height="1" fill="#ffffff"/><rect x="7" y="5" width="1" height="1" fill="#5a5a5a"/><rect x="1" y="6" width="1" height="1" fill="#5a5a5a"/><rect x="2" y="6" width="6" height="1" fill="#ffffff"/><rect x="8" y="6" width="1" height="1" fill="#5a5a5a"/><rect x="0" y="7" width="1" height="1" fill="#5a5a5a"/><rect x="1" y="7" width="3" height="1" fill="#ffffff"/><rect x="4" y="7" width="2" height="1" fill="#5a5a5a"/><rect x="6" y="7" width="3" height="1" fill="#ffffff"/><rect x="9" y="7" width="1" height="1" fill="#5a5a5a"/><rect x="0" y="8" width="1" height="1" fill="#5a5a5a"/><rect x="1" y="8" width="2" height="1" fill="#ffffff"/><rect x="3" y="8" width="1" height="1" fill="#5a5a5a"/><rect x="6" y="8" width="1" height="1" fill="#5a5a5a"/><rect x="7" y="8" width="2" height="1" fill="#ffffff"/><rect x="9" y="8" width="1" height="1" fill="#5a5a5a"/><rect x="0" y="9" width="3" height="1" fill="#5a5a5a"/><rect x="7" y="9" width="3" height="1" fill="#5a5a5a"/></svg><svg class="a" style="left:0;top:0" width="130" height="630"><path d="M28.5 491 V511.5 H49.5 V487" stroke="#000" fill="none"/><path d="M28 501.5 H50" stroke="#000"/><path d="M28 506.5 H50" stroke="#000"/><path d="M59.5 490 V510.5 H80.5 V487" stroke="#000" fill="none"/><path d="M59 501.5 H81" stroke="#000"/><path d="M59 506.5 H81" stroke="#000"/><path d="M93.5 488 V508.5 H116.5 V487" stroke="#000" fill="none"/><path d="M93 497.5 H117" stroke="#000"/><path d="M93 503.5 H117" stroke="#000"/><path d="M57.5 527 V550.5 H78.5 V527" stroke="#000" fill="none"/><path d="M57 527.5 H79" stroke="#000"/><path d="M57 541.5 H79" stroke="#000"/><path d="M57 546.5 H79" stroke="#000"/><path d="M83.5 560 V580.5 H104.5 V560" stroke="#000" fill="none"/><path d="M83 569.5 H105" stroke="#000"/><path d="M83 574.5 H105" stroke="#000"/><path d="M57.5 591 V612.5 H78.5 V591" stroke="#000" fill="none"/><path d="M57 591.5 H79" stroke="#000"/><path d="M57 601.5 H79" stroke="#000"/><path d="M57 606.5 H79" stroke="#000"/><path d="M37 512 L59 591" stroke="#222" stroke-dasharray="3 2.5" fill="none"/><path d="M48.5 512 L59.5 527" stroke="#222" stroke-dasharray="3 2.5" fill="none"/><path d="M69 527 L93 507.5" stroke="#222" fill="none"/><path d="M73 591 L83 581" stroke="#222" fill="none"/><path d="M31 489.5H42" stroke="#404040" stroke-dasharray="1 1" opacity=".45"/><path d="M33 493.5H42" stroke="#404040" stroke-dasharray="1 1" opacity=".45"/><path d="M62 488.5H73" stroke="#404040" stroke-dasharray="1 1" opacity=".45"/><path d="M63 493.5H72" stroke="#404040" stroke-dasharray="1 1" opacity=".45"/><path d="M94 489.5H104" stroke="#404040" stroke-dasharray="1 1" opacity=".45"/><path d="M102 489.5H110" stroke="#404040" stroke-dasharray="1 1" opacity=".45"/><path d="M61 528.5H70" stroke="#404040" stroke-dasharray="1 1" opacity=".45"/><path d="M61 533.5H69" stroke="#404040" stroke-dasharray="1 1" opacity=".45"/><path d="M89 561.5H94" stroke="#404040" stroke-dasharray="1 1" opacity=".45"/><path d="M62 593.5H70" stroke="#404040" stroke-dasharray="1 1" opacity=".45"/></svg><svg class="a" style="left:0;top:0" width="964" height="378"><line x1="671" y1="0.5" x2="771" y2="0.5" stroke="#000" stroke-width="1"/><line x1="626" y1="0" x2="680.5" y2="194" stroke="#000" stroke-width="1.1" stroke-dasharray="6 4"/><rect x="796.5" y="42.5" width="99" height="99" fill="#fff" stroke="#000"/><line x1="796" y1="66.5" x2="896" y2="66.5" stroke="#000"/><line x1="796" y1="91.5" x2="896" y2="91.5" stroke="#000"/><line x1="796" y1="116.5" x2="896" y2="116.5" stroke="#000"/><rect x="882.5" y="44.5" width="10" height="10" fill="#fff" stroke="#000"/><path d="M885 52L890 47M887 47h3v3" stroke="#000" stroke-width="1.8" fill="none"/><rect x="674.5" y="194.5" width="99" height="99" fill="#fff" stroke="#000"/><line x1="674" y1="218.5" x2="774" y2="218.5" stroke="#000"/><line x1="674" y1="243.5" x2="774" y2="243.5" stroke="#000"/><line x1="674" y1="268.5" x2="774" y2="268.5" stroke="#000"/><line x1="748" y1="194" x2="790" y2="147" stroke="#333"/><path d="M796.5 141.5L783.5 143.5L795.5 154Z" fill="#fff" stroke="#333"/></svg><div class="t" style="left:796px;width:100px;text-align:center;top:48px;font-size:14px;color:#000">Class2</div><div class="t" style="left:674px;width:100px;text-align:center;top:200px;font-size:14px;color:#000">InnerClass</div><div class="t" style="left:414px;width:100px;text-align:right;top:403px">Welcome</div><div style="position:absolute;left:518px;top:398px;width:141px;height:25px;background:#fff;border:1px solid #a0a0a0;border-top:none;border-radius:0 0 4px 4px"></div><svg class="a" style="left:523px;top:403px" width="14" height="14" shape-rendering="crispEdges"><rect x="0" y="0" width="6" height="1" fill="#000"/><rect x="0" y="1" width="1" height="1" fill="#000"/><rect x="1" y="1" width="4" height="1" fill="#1aa0d0"/><rect x="5" y="1" width="1" height="1" fill="#000"/><rect x="0" y="2" width="12" height="1" fill="#000"/><rect x="0" y="3" width="1" height="1" fill="#000"/><rect x="1" y="3" width="4" height="1" fill="#8ccc10"/><rect x="5" y="3" width="1" height="1" fill="#000"/><rect x="11" y="3" width="1" height="1" fill="#000"/><rect x="0" y="4" width="6" height="1" fill="#000"/><rect x="11" y="4" width="1" height="1" fill="#000"/><rect x="0" y="5" width="1" height="1" fill="#000"/><rect x="1" y="5" width="4" height="1" fill="#fff"/><rect x="5" y="5" width="1" height="1" fill="#000"/><rect x="11" y="5" width="1" height="1" fill="#000"/><rect x="0" y="6" width="1" height="1" fill="#000"/><rect x="1" y="6" width="4" height="1" fill="#fff"/><rect x="5" y="6" width="1" height="1" fill="#000"/><rect x="7" y="6" width="6" height="1" fill="#000"/><rect x="0" y="7" width="6" height="1" fill="#000"/><rect x="7" y="7" width="1" height="1" fill="#000"/><rect x="8" y="7" width="4" height="1" fill="#1aa0d0"/><rect x="12" y="7" width="1" height="1" fill="#000"/><rect x="7" y="8" width="6" height="1" fill="#000"/><rect x="7" y="9" width="1" height="1" fill="#000"/><rect x="8" y="9" width="4" height="1" fill="#8ccc10"/><rect x="12" y="9" width="1" height="1" fill="#000"/><rect x="7" y="10" width="6" height="1" fill="#000"/><rect x="7" y="11" width="1" height="1" fill="#000"/><rect x="8" y="11" width="4" height="1" fill="#fff"/><rect x="12" y="11" width="1" height="1" fill="#000"/><rect x="7" y="12" width="1" height="1" fill="#000"/><rect x="8" y="12" width="4" height="1" fill="#fff"/><rect x="12" y="12" width="1" height="1" fill="#000"/><rect x="7" y="13" width="6" height="1" fill="#000"/></svg><div class="t" style="left:542px;top:403px;color:#000;">ClassDiagram</div><svg class="a" style="left:641px;top:405px" width="10" height="10" shape-rendering="crispEdges"><rect x="0" y="0" width="3" height="1" fill="#5a5a5a"/><rect x="7" y="0" width="3" height="1" fill="#5a5a5a"/><rect x="0" y="1" width="1" height="1" fill="#5a5a5a"/><rect x="1" y="1" width="2" height="1" fill="#ffffff"/><rect x="3" y="1" width="1" height="1" fill="#5a5a5a"/><rect x="6" y="1" width="1" height="1" fill="#5a5a5a"/><rect x="7" y="1" width="2" height="1" fill="#ffffff"/><rect x="9" y="1" width="1" height="1" fill="#5a5a5a"/><rect x="0" y="2" width="1" height="1" fill="#5a5a5a"/><rect x="1" y="2" width="3" height="1" fill="#ffffff"/><rect x="4" y="2" width="2" height="1" fill="#5a5a5a"/><rect x="6" y="2" width="3" height="1" fill="#ffffff"/><rect x="9" y="2" width="1" height="1" fill="#5a5a5a"/><rect x="1" y="3" width="1" height="1" fill="#5a5a5a"/><rect x="2" y="3" width="6" height="1" fill="#ffffff"/><rect x="8" y="3" width="1" height="1" fill="#5a5a5a"/><rect x="2" y="4" width="1" height="1" fill="#5a5a5a"/><rect x="3" y="4" width="4" height="1" fill="#ffffff"/><rect x="7" y="4" width="1" height="1" fill="#5a5a5a"/><rect x="2" y="5" width="1" height="1" fill="#5a5a5a"/><rect x="3" y="5" width="4" height="1" fill="#ffffff"/><rect x="7" y="5" width="1" height="1" fill="#5a5a5a"/><rect x="1" y="6" width="1" height="1" fill="#5a5a5a"/><rect x="2" y="6" width="6" height="1" fill="#ffffff"/><rect x="8" y="6" width="1" height="1" fill="#5a5a5a"/><rect x="0" y="7" width="1" height="1" fill="#5a5a5a"/><rect x="1" y="7" width="3" height="1" fill="#ffffff"/><rect x="4" y="7" width="2" height="1" fill="#5a5a5a"/><rect x="6" y="7" width="3" height="1" fill="#ffffff"/><rect x="9" y="7" width="1" height="1" fill="#5a5a5a"/><rect x="0" y="8" width="1" height="1" fill="#5a5a5a"/><rect x="1" y="8" width="2" height="1" fill="#ffffff"/><rect x="3" y="8" width="1" height="1" fill="#5a5a5a"/><rect x="6" y="8" width="1" height="1" fill="#5a5a5a"/><rect x="7" y="8" width="2" height="1" fill="#ffffff"/><rect x="9" y="8" width="1" height="1" fill="#5a5a5a"/><rect x="0" y="9" width="3" height="1" fill="#5a5a5a"/><rect x="7" y="9" width="3" height="1" fill="#5a5a5a"/></svg><div style="position:absolute;left:504px;top:430px;width:38px;height:30px;background:linear-gradient(#d9e2ec,#f3f6fa);border-radius:0 6px 0 0"></div><div class="t" style="left:416px;width:100px;text-align:right;top:438px">Properties</div><svg class="a" style="left:524px;top:441px" width="10" height="10" shape-rendering="crispEdges"><rect x="0" y="0" width="3" height="1" fill="#5a5a5a"/><rect x="7" y="0" width="3" height="1" fill="#5a5a5a"/><rect x="0" y="1" width="1" height="1" fill="#5a5a5a"/><rect x="1" y="1" width="2" height="1" fill="#ffffff"/><rect x="3" y="1" width="1" height="1" fill="#5a5a5a"/><rect x="6" y="1" width="1" height="1" fill="#5a5a5a"/><rect x="7" y="1" width="2" height="1" fill="#ffffff"/><rect x="9" y="1" width="1" height="1" fill="#5a5a5a"/><rect x="0" y="2" width="1" height="1" fill="#5a5a5a"/><rect x="1" y="2" width="3" height="1" fill="#ffffff"/><rect x="4" y="2" width="2" height="1" fill="#5a5a5a"/><rect x="6" y="2" width="3" height="1" fill="#ffffff"/><rect x="9" y="2" width="1" height="1" fill="#5a5a5a"/><rect x="1" y="3" width="1" height="1" fill="#5a5a5a"/><rect x="2" y="3" width="6" height="1" fill="#ffffff"/><rect x="8" y="3" width="1" height="1" fill="#5a5a5a"/><rect x="2" y="4" width="1" height="1" fill="#5a5a5a"/><rect x="3" y="4" width="4" height="1" fill="#ffffff"/><rect x="7" y="4" width="1" height="1" fill="#5a5a5a"/><rect x="2" y="5" width="1" height="1" fill="#5a5a5a"/><rect x="3" y="5" width="4" height="1" fill="#ffffff"/><rect x="7" y="5" width="1" height="1" fill="#5a5a5a"/><rect x="1" y="6" width="1" height="1" fill="#5a5a5a"/><rect x="2" y="6" width="6" height="1" fill="#ffffff"/><rect x="8" y="6" width="1" height="1" fill="#5a5a5a"/><rect x="0" y="7" width="1" height="1" fill="#5a5a5a"/><rect x="1" y="7" width="3" height="1" fill="#ffffff"/><rect x="4" y="7" width="2" height="1" fill="#5a5a5a"/><rect x="6" y="7" width="3" height="1" fill="#ffffff"/><rect x="9" y="7" width="1" height="1" fill="#5a5a5a"/><rect x="0" y="8" width="1" height="1" fill="#5a5a5a"/><rect x="1" y="8" width="2" height="1" fill="#ffffff"/><rect x="3" y="8" width="1" height="1" fill="#5a5a5a"/><rect x="6" y="8" width="1" height="1" fill="#5a5a5a"/><rect x="7" y="8" width="2" height="1" fill="#ffffff"/><rect x="9" y="8" width="1" height="1" fill="#5a5a5a"/><rect x="0" y="9" width="3" height="1" fill="#5a5a5a"/><rect x="7" y="9" width="3" height="1" fill="#5a5a5a"/></svg><svg class="a" style="left:548px;top:439px" width="12" height="14"><path d="M2 8L5 12L10 1" stroke="#48bc48" stroke-width="2.6" fill="none" stroke-linecap="round" stroke-linejoin="round"/></svg><div class="t" style="left:566px;top:438px;color:#8a8a8a;letter-spacing:0.4px">Model Validation</div><svg class="a" style="left:690px;top:437px" width="18" height="17"><path d="M1.5 3.5L4 1.5V2.8H9V1.5L11.5 3.5L9 5.5V4.2H4V5.5Z" fill="#fdf3d8" stroke="#d0a860" stroke-width="1" stroke-linejoin="round"/><path d="M1.5 15.5L7 10" stroke="#f8d860" stroke-width="2"/><path d="M7 16L10 13" stroke="#f8e080" stroke-width="1.6"/><path d="M4.5 10.5L8 7.5L12 11.5L9 15Z" fill="#d0d0d0" stroke="#b8b8a8" stroke-width=".8"/><path d="M9 7L14 2L16.5 4.5L11.5 9.5Z" fill="#f8e0a8" stroke="#e0b860" stroke-width=".9"/><circle cx="12.5" cy="5" r=".9" fill="#3a70c0"/><circle cx="13.8" cy="3.8" r=".9" fill="#3a70c0"/></svg><div class="t" style="left:711px;top:438px;color:#8a8a8a;letter-spacing:-0.35px">References</div><div class="t" style="left:400px;width:132px;text-align:right;top:471px;height:20px;line-height:20px;font-size:17.3px;font-weight:bold;color:#21508f">&laquo;Project&raquo;</div><div class="t" style="left:537px;top:471px;height:20px;line-height:20px;font-size:17.3px;font-weight:bold;color:#21508f">myPackage</div><div style="position:absolute;left:504px;top:496px;width:16px;height:202px;background:#efefef;border-right:1px solid #a0a0a0"></div><div style="position:absolute;left:504px;top:509px;width:15px;height:24px;background:#d6d6ca"></div><div style="position:absolute;left:504px;top:535px;width:15px;height:25px;background:#d8d8cc"></div><div class="t" style="left:531px;top:509px;color:#000;letter-spacing:0.2px">Profile applications</div><div style="position:absolute;left:531px;top:537px;width:433px;height:140px;background:#fff;border:1px solid #a9a9a9;border-right:none"></div><div style="position:absolute;left:532px;top:538px;width:432px;height:25px;background:linear-gradient(#fff 0,#fff 35%,#f4f4f4 40%,#f4f4f4);border-bottom:1px solid #e0e0e0"></div><div style="position:absolute;left:932px;top:538px;width:1px;height:25px;background:#e5e5e5"></div><div class="t" style="left:540px;top:546px;color:#000;">Name</div><div class="t" style="left:939px;top:546px;color:#000;">Location</div><div class="t" style="left:937px;top:569px;color:#000;">path</div><div class="t" style="left:937px;top:591px;color:#000;">path</div><div class="t" style="left:534px;top:688px;color:#000;">Applied stereotypes:</div><div style="position:absolute;left:504px;top:40px;width:4px;height:658px;background:linear-gradient(90deg,rgba(0,0,0,.45),rgba(0,0,0,.25) 40%,rgba(0,0,0,0))"></div><div style="position:absolute;left:121px;top:36px;width:383px;height:670px;background:#f0f0f0;border:1px solid #979797"></div><div style="position:absolute;left:152px;top:37px;width:1px;height:661px;background:#e2e3e3"></div><div style="position:absolute;left:153px;top:37px;width:1px;height:661px;background:#fff"></div><div style="position:absolute;left:154px;top:370px;width:348px;height:1px;background:#d7d7d7"></div><div style="position:absolute;left:154px;top:371px;width:348px;height:1px;background:#fff"></div><div style="position:absolute;left:154px;top:399px;width:348px;height:1px;background:#d7d7d7"></div><div style="position:absolute;left:154px;top:400px;width:348px;height:1px;background:#fff"></div><div style="position:absolute;left:154px;top:452px;width:348px;height:1px;background:#d7d7d7"></div><div style="position:absolute;left:154px;top:453px;width:348px;height:1px;background:#fff"></div><div style="position:absolute;left:154px;top:460px;width:348px;height:1px;background:#d7d7d7"></div><div style="position:absolute;left:154px;top:461px;width:348px;height:1px;background:#fff"></div><div style="position:absolute;left:154px;top:534px;width:348px;height:1px;background:#d7d7d7"></div><div style="position:absolute;left:154px;top:535px;width:348px;height:1px;background:#fff"></div><div style="position:absolute;left:154px;top:696px;width:348px;height:1px;background:#d7d7d7"></div><div style="position:absolute;left:154px;top:697px;width:348px;height:1px;background:#fff"></div><div style="position:absolute;left:124px;top:559px;width:378px;height:22px;background:linear-gradient(#f3f7fd,#e5eefb);border:1px solid #aecbf0;border-radius:3px"></div><div style="position:absolute;left:152px;top:560px;width:1px;height:20px;background:rgba(200,210,225,.5)"></div><div class="t" style="left:158px;top:44px;color:#000;">Coverage As</div><svg class="a" style="left:488px;top:47px" width="5" height="8"><path d="M0 0L4.5 3.5L0 7Z" fill="#1a1a1a"/></svg><div class="t" style="left:158px;top:67px;color:#000;">Qompass-Architect</div><svg class="a" style="left:488px;top:70px" width="5" height="8"><path d="M0 0L4.5 3.5L0 7Z" fill="#1a1a1a"/></svg><svg class="a" style="left:130px;top:67px" width="14" height="14"><rect x="0" y="0" width="14" height="14" fill="#1b5c9e"/><rect x="0.5" y="0.5" width="13" height="13" fill="none" stroke="#70c0ee" stroke-opacity=".8"/><path d="M11.2 3.6 A5 5 0 1 0 11.6 10.2" stroke="#fff" stroke-width="2.2" fill="none"/><ellipse cx="7.2" cy="7" rx="3" ry="3.4" fill="#2a7cc8"/><path d="M3.5 9.2 L11.5 4.8" stroke="#e4dc40" stroke-width="1.8"/></svg><div class="t" style="left:158px;top:90px;color:#000;">Start code synchronisation</div><div class="t" style="left:158px;top:114px;color:#6d6d6d;">com.incquerylabs.evm.jdt.ui.uml2java</div><div class="t" style="left:158px;top:138px;color:#000;">Utils</div><svg class="a" style="left:488px;top:141px" width="5" height="8"><path d="M0 0L4.5 3.5L0 7Z" fill="#1a1a1a"/></svg><div class="t" style="left:158px;top:161px;color:#000;">Moka</div><svg class="a" style="left:488px;top:164px" width="5" height="8"><path d="M0 0L4.5 3.5L0 7Z" fill="#1a1a1a"/></svg><svg class="a" style="left:129px;top:160px" width="16" height="15"><path d="M0.4 10.5 A8 6.8 0 0 1 16 5 Z" fill="#0a96b8"/><path d="M1.2 11.8 L16 6.4 A8 6.8 0 0 1 1.2 11.8 Z" fill="#98bf10"/></svg><div class="t" style="left:158px;top:184px;color:#000;">Profiles</div><svg class="a" style="left:488px;top:187px" width="5" height="8"><path d="M0 0L4.5 3.5L0 7Z" fill="#1a1a1a"/></svg><div class="t" style="left:158px;top:208px;color:#000;">New Child</div><svg class="a" style="left:488px;top:211px" width="5" height="8"><path d="M0 0L4.5 3.5L0 7Z" fill="#1a1a1a"/></svg><div class="t" style="left:158px;top:232px;color:#000;">New Relationship</div><svg class="a" style="left:488px;top:235px" width="5" height="8"><path d="M0 0L4.5 3.5L0 7Z" fill="#1a1a1a"/></svg><div class="t" style="left:158px;top:256px;color:#000;">New Relationship</div><svg class="a" style="left:488px;top:259px" width="5" height="8"><path d="M0 0L4.5 3.5L0 7Z" fill="#1a1a1a"/></svg><div class="t" style="left:158px;top:280px;color:#000;">New Child</div><svg class="a" style="left:488px;top:283px" width="5" height="8"><path d="M0 0L4.5 3.5L0 7Z" fill="#1a1a1a"/></svg><div class="t" style="left:158px;top:302px;color:#000;">New Diagram</div><svg class="a" style="left:488px;top:305px" width="5" height="8"><path d="M0 0L4.5 3.5L0 7Z" fill="#1a1a1a"/></svg><svg class="a" style="left:130px;top:302px" width="14" height="16"><rect x="0.75" y="0.75" width="12.5" height="14.5" fill="#fff" stroke="#000" stroke-width="1.5"/><rect x="1.5" y="1.5" width="11" height="2" fill="#20a8d8"/><rect x="2.75" y="5.75" width="5.5" height="6.5" fill="#98d000" stroke="#000" stroke-width="1.5"/><rect x="3.5" y="6.5" width="4" height="1" fill="#20a8d8"/><path d="M10.5 1v7M7 4.5h7" stroke="#ffd000" stroke-width="3.2"/><path d="M10.5 2v5M8 4.5h5" stroke="#ff5a10" stroke-width="1.6"/></svg><div class="t" style="left:158px;top:325px;color:#000;">New Table</div><svg class="a" style="left:488px;top:328px" width="5" height="8"><path d="M0 0L4.5 3.5L0 7Z" fill="#1a1a1a"/></svg><svg class="a" style="left:129px;top:325px" width="16" height="14"><rect x="3.5" y="0.5" width="12" height="3" fill="#20a8d8" stroke="#000"/><rect x="0.75" y="2.75" width="14.5" height="10.5" fill="#fff" stroke="#000" stroke-width="1.5"/><rect x="1.5" y="3.5" width="2.5" height="9" fill="#98d000"/><path d="M1.5 6.5h13M1.5 9.5h13M4.5 3.5v9M8.5 3.5v9M12 3.5v9" stroke="#909090"/><path d="M11.5 1v7M8 4.5h7" stroke="#ffd000" stroke-width="3.2"/><path d="M11.5 2v5M9 4.5h5" stroke="#ff5a10" stroke-width="1.6"/></svg><div class="t" style="left:158px;top:347px;color:#6d6d6d;">Delete</div><div class="t" style="left:382px;width:101px;text-align:right;top:347px;color:#6d6d6d">Delete</div><svg class="a" style="left:130px;top:347px" width="15" height="14"><path d="M2.5 2.5L12.5 11.5M12.5 2.5L2.5 11.5" stroke="#a4a4a4" stroke-width="3.4" stroke-linecap="round"/></svg><div class="t" style="left:158px;top:376px;color:#000;">Rename</div><div class="t" style="left:382px;width:101px;text-align:right;top:376px;color:#000">F2</div><svg class="a" style="left:129px;top:376px" width="16" height="16"><rect x="0" y="3" width="16" height="10" fill="#fff"/><rect x="0.5" y="4.5" width="13" height="8" fill="#fff" stroke="#38a0f0"/><text x="2" y="11.5" font-size="7.5" font-weight="bold" font-family="Liberation Sans" fill="#000">ab</text><path d="M11.5 2.5v12M10 2.5h3M10 14.5h3" stroke="#505070" stroke-width="1"/><path d="M14 5v7" stroke="#a040c0" stroke-width=".8"/></svg><div class="t" style="left:158px;top:407px;color:#000;">Undo</div><div class="t" style="left:382px;width:101px;text-align:right;top:407px;color:#000">Ctrl+Z</div><svg class="a" style="left:130px;top:406px" width="15" height="15"><path d="M13.5 0.8 C15.5 5 13 9.5 7.5 9.5 L7.5 13.5 L0.8 8 L7.5 2.8 L7.5 6 C10.5 6 12.5 4 13.5 0.8Z" fill="#fad878" stroke="#d49a18" stroke-width="1" stroke-linejoin="round"/></svg><div class="t" style="left:158px;top:429px;color:#6d6d6d;">Redo</div><div class="t" style="left:382px;width:101px;text-align:right;top:429px;color:#6d6d6d">Ctrl+Y</div><svg class="a" style="left:129px;top:428px" width="15" height="14"><path d="M1.5 0.8 C-0.5 5 2 9 7.5 9 L7.5 13 L14.2 7.5 L7.5 2.5 L7.5 5.5 C4.5 5.5 2.5 3.5 1.5 0.8Z" fill="#f4f4f4" stroke="#c4c4c4" stroke-width="1" stroke-linejoin="round"/></svg><div class="t" style="left:158px;top:467px;color:#6d6d6d;">Cut</div><div class="t" style="left:382px;width:101px;text-align:right;top:467px;color:#6d6d6d">Ctrl+X</div><svg class="a" style="left:130px;top:467px" width="14" height="15"><path d="M5 9L13 0.5M6.5 10.5L10.5 3" stroke="#b4b4b4" stroke-width="1.3"/><circle cx="3" cy="9.5" r="2.3" fill="none" stroke="#b4b4b4" stroke-width="1.3"/><circle cx="6" cy="12.3" r="2.3" fill="none" stroke="#b4b4b4" stroke-width="1.3"/></svg><div class="t" style="left:158px;top:488px;color:#000;">Copy</div><div class="t" style="left:382px;width:101px;text-align:right;top:488px;color:#000">Ctrl+C</div><svg class="a" style="left:130px;top:489px" width="14" height="15"><path d="M0.5 0.5h7l2 2v10h-9z" fill="#dfe6f0" stroke="#8a8070"/><path d="M2 3h4M2 5h4M2 7h4M2 9h4" stroke="#6a9ad0"/><path d="M4.5 2.5h7l2 2v10h-9z" fill="#fff" stroke="#8a8070"/><path d="M11.5 2.5v2h2" fill="#e8d8a0" stroke="#c0a050"/><path d="M6 6.5h6M6 8.5h6M6 10.5h6M6 12.5h6" stroke="#4a88d0"/></svg><div class="t" style="left:158px;top:511px;color:#6d6d6d;">Paste</div><div class="t" style="left:382px;width:101px;text-align:right;top:511px;color:#6d6d6d">Ctrl+V</div><svg class="a" style="left:131px;top:511px" width="13" height="15"><rect x="0.5" y="2.5" width="10" height="12" rx="1.2" fill="#e8e8e8" stroke="#c8c8c8"/><rect x="3.5" y="0.5" width="4" height="3" fill="#dcdcdc" stroke="#c0c0c0"/><path d="M6.5 6.5h4l2 2v6h-6z" fill="#f8f8f8" stroke="#c4c4c4"/><path d="M8 9.5h3M8 11.5h3" stroke="#d0d0d0"/></svg><div class="t" style="left:158px;top:541px;color:#000;">Refactor</div><svg class="a" style="left:488px;top:544px" width="5" height="8"><path d="M0 0L4.5 3.5L0 7Z" fill="#1a1a1a"/></svg><svg class="a" style="left:128px;top:540px" width="18" height="14"><path d="M0.5 8.5 C3 3 7 1.5 11 2.5 C8 2.5 4 4.5 1.5 9Z" fill="#111"/><path d="M11 1 C16 0 18.5 4 16 9 C14 13 10 14 6.5 13.5 C10 10 11.5 6 11 1Z" fill="#9ad020"/><path d="M12.5 6 C14.5 4 16.5 4 17 6 C16 10 13 12.5 9.5 13 C11.5 10.5 12.5 8.5 12.5 6Z" fill="#1aa0c8"/><circle cx="13.5" cy="3" r="0.8" fill="#111"/></svg><div class="t" style="left:158px;top:563px;color:#000;">Import</div><svg class="a" style="left:488px;top:566px" width="5" height="8"><path d="M0 0L4.5 3.5L0 7Z" fill="#1a1a1a"/></svg><svg class="a" style="left:129px;top:564px" width="16" height="13"><path d="M0.5 5.5h3v4h9v-4h3v7h-15z" fill="#1ca8c8" stroke="#0a6a84"/><path d="M3.5 9.5h9" stroke="#0a6a84"/><path d="M2.5 0.5L8.5 6.5" stroke="#98c820" stroke-width="1.6"/><path d="M9.5 2.5v5h-5z" fill="#98c820"/></svg><div class="t" style="left:158px;top:585px;color:#000;">Export</div><svg class="a" style="left:488px;top:588px" width="5" height="8"><path d="M0 0L4.5 3.5L0 7Z" fill="#1a1a1a"/></svg><svg class="a" style="left:129px;top:586px" width="16" height="13"><path d="M0.5 5.5h3v4h9v-4h3v7h-15z" fill="#1ca8c8" stroke="#0a6a84"/><path d="M3.5 9.5h9" stroke="#0a6a84"/><path d="M9.5 7.5L3.5 1.5" stroke="#98c820" stroke-width="1.6"/><path d="M2 0.5h5.5l-5.5 5.5z" fill="#98c820"/></svg><div class="t" style="left:158px;top:607px;color:#6d6d6d;">Enable write</div><svg class="a" style="left:130px;top:605px" width="15" height="16"><path d="M1 3.5 L3.5 1 L13 10.5 L14.5 15 L10 13.5 Z" fill="#d4d4d4" stroke="#c4c4c4" stroke-linejoin="round"/><path d="M3 5.5L10.5 13M5.5 3L13 10.5" stroke="#e8e8e8" stroke-width=".8"/><path d="M12 13 L14.5 15 L13.5 12z" fill="#a8a8a8"/></svg><div class="t" style="left:158px;top:629px;color:#000;">Validation</div><svg class="a" style="left:488px;top:632px" width="5" height="8"><path d="M0 0L4.5 3.5L0 7Z" fill="#1a1a1a"/></svg><svg class="a" style="left:131px;top:628px" width="11" height="15"><path d="M1.8 9 L4.3 13 L9.5 1.5" stroke="#10b020" stroke-width="2.8" fill="none" stroke-linecap="round" stroke-linejoin="round"/></svg><div class="t" style="left:158px;top:651px;color:#000;">Create Submodel</div><svg class="a" style="left:130px;top:652px" width="16" height="13"><path d="M0.5 0.5h4l1 1h5v7h-10z" fill="#e4ecf6" stroke="#8aa0c0"/><path d="M0.5 2.5h10" stroke="#8aa0c0"/><path d="M5.5 6.5h4l1 1h5v5h-10z" fill="#e0f4e4" stroke="#3a9a5a"/><path d="M5.5 8.5h10" stroke="#3a9a5a"/><path d="M7 11.5l2-2 2 1.5 2-2 1.5 1.5" stroke="#3a8a4a" fill="none" stroke-width=".9"/></svg><div class="t" style="left:158px;top:673px;color:#000;">Navigate</div><svg class="a" style="left:488px;top:676px" width="5" height="8"><path d="M0 0L4.5 3.5L0 7Z" fill="#1a1a1a"/></svg><div style="position:absolute;left:796px;top:560px;width:4px;height:70px;background:linear-gradient(90deg,rgba(0,0,0,.4),rgba(0,0,0,0))"></div><div style="position:absolute;left:502px;top:627px;width:298px;height:4px;background:linear-gradient(rgba(0,0,0,.4),rgba(0,0,0,0))"></div><div style="position:absolute;left:498px;top:556px;width:298px;height:71px;background:#f0f0f0;border:1px solid #979797"></div><div style="position:absolute;left:529px;top:557px;width:1px;height:69px;background:#e2e3e3"></div><div style="position:absolute;left:530px;top:557px;width:1px;height:69px;background:#fff"></div><div style="position:absolute;left:501px;top:581px;width:292px;height:22px;background:linear-gradient(#f3f7fd,#e5eefb);border:1px solid #aecbf0;border-radius:3px"></div><svg class="a" style="left:505px;top:564px" width="14" height="11" shape-rendering="crispEdges"><rect x="0" y="0" width="7" height="1" fill="#2066b0"/><rect x="0" y="1" width="1" height="1" fill="#2066b0"/><rect x="1" y="1" width="5" height="1" fill="#ffffff"/><rect x="6" y="1" width="1" height="1" fill="#2066b0"/><rect x="0" y="2" width="14" height="1" fill="#2066b0"/><rect x="0" y="3" width="1" height="1" fill="#2066b0"/><rect x="1" y="3" width="12" height="1" fill="#e8f4fc"/><rect x="13" y="3" width="1" height="1" fill="#2066b0"/><rect x="0" y="4" width="1" height="1" fill="#2066b0"/><rect x="1" y="4" width="4" height="1" fill="#e8f4fc"/><rect x="5" y="4" width="3" height="1" fill="#2a60a8"/><rect x="8" y="4" width="5" height="1" fill="#e8f4fc"/><rect x="13" y="4" width="1" height="1" fill="#2066b0"/><rect x="0" y="5" width="1" height="1" fill="#2066b0"/><rect x="1" y="5" width="2" height="1" fill="#e8f4fc"/><rect x="3" y="5" width="1" height="1" fill="#2a60a8"/><rect x="4" y="5" width="1" height="1" fill="#e8f4fc"/><rect x="5" y="5" width="1" height="1" fill="#2a60a8"/><rect x="6" y="5" width="2" height="1" fill="#e8f4fc"/><rect x="8" y="5" width="1" height="1" fill="#2a60a8"/><rect x="9" y="5" width="1" height="1" fill="#e8f4fc"/><rect x="10" y="5" width="1" height="1" fill="#2a60a8"/><rect x="11" y="5" width="2" height="1" fill="#e8f4fc"/><rect x="13" y="5" width="1" height="1" fill="#2066b0"/><rect x="0" y="6" width="1" height="1" fill="#2066b0"/><rect x="1" y="6" width="1" height="1" fill="#e8f4fc"/><rect x="2" y="6" width="1" height="1" fill="#2a60a8"/><rect x="3" y="6" width="2" height="1" fill="#e8f4fc"/><rect x="5" y="6" width="3" height="1" fill="#2a60a8"/><rect x="8" y="6" width="3" height="1" fill="#e8f4fc"/><rect x="11" y="6" width="1" height="1" fill="#2a60a8"/><rect x="12" y="6" width="1" height="1" fill="#e8f4fc"/><rect x="13" y="6" width="1" height="1" fill="#2066b0"/><rect x="0" y="7" width="1" height="1" fill="#2066b0"/><rect x="1" y="7" width="2" height="1" fill="#e8f4fc"/><rect x="3" y="7" width="1" height="1" fill="#2a60a8"/><rect x="4" y="7" width="1" height="1" fill="#e8f4fc"/><rect x="5" y="7" width="1" height="1" fill="#2a60a8"/><rect x="6" y="7" width="4" height="1" fill="#e8f4fc"/><rect x="10" y="7" width="1" height="1" fill="#2a60a8"/><rect x="11" y="7" width="2" height="1" fill="#e8f4fc"/><rect x="13" y="7" width="1" height="1" fill="#2066b0"/><rect x="0" y="8" width="1" height="1" fill="#2066b0"/><rect x="1" y="8" width="4" height="1" fill="#e8f4fc"/><rect x="5" y="8" width="1" height="1" fill="#2a60a8"/><rect x="6" y="8" width="7" height="1" fill="#e8f4fc"/><rect x="13" y="8" width="1" height="1" fill="#2066b0"/><rect x="0" y="9" width="1" height="1" fill="#2066b0"/><rect x="1" y="9" width="12" height="1" fill="#e8f4fc"/><rect x="13" y="9" width="1" height="1" fill="#2066b0"/><rect x="0" y="10" width="14" height="1" fill="#2066b0"/></svg><svg class="a" style="left:505px;top:588px" width="14" height="9" shape-rendering="crispEdges"><rect x="0" y="0" width="7" height="1" fill="#2f6aac"/><rect x="0" y="1" width="1" height="1" fill="#2f6aac"/><rect x="1" y="1" width="5" height="1" fill="#ffffff"/><rect x="6" y="1" width="2" height="1" fill="#2f6aac"/><rect x="0" y="2" width="14" height="1" fill="#2f6aac"/><rect x="0" y="3" width="1" height="1" fill="#2f6aac"/><rect x="1" y="3" width="12" height="1" fill="#e6eef8"/><rect x="13" y="3" width="1" height="1" fill="#2f6aac"/><rect x="0" y="4" width="1" height="1" fill="#2f6aac"/><rect x="1" y="4" width="12" height="1" fill="#e6eef8"/><rect x="13" y="4" width="1" height="1" fill="#2f6aac"/><rect x="0" y="5" width="1" height="1" fill="#2f6aac"/><rect x="1" y="5" width="12" height="1" fill="#e6eef8"/><rect x="13" y="5" width="1" height="1" fill="#2f6aac"/><rect x="0" y="6" width="1" height="1" fill="#2f6aac"/><rect x="1" y="6" width="12" height="1" fill="#e6eef8"/><rect x="13" y="6" width="1" height="1" fill="#2f6aac"/><rect x="0" y="7" width="1" height="1" fill="#2f6aac"/><rect x="1" y="7" width="12" height="1" fill="#e6eef8"/><rect x="13" y="7" width="1" height="1" fill="#2f6aac"/><rect x="0" y="8" width="14" height="1" fill="#2f6aac"/></svg><svg class="a" style="left:505px;top:610px" width="14" height="9" shape-rendering="crispEdges"><rect x="0" y="0" width="7" height="1" fill="#2f6aac"/><rect x="0" y="1" width="1" height="1" fill="#2f6aac"/><rect x="1" y="1" width="5" height="1" fill="#ffffff"/><rect x="6" y="1" width="2" height="1" fill="#2f6aac"/><rect x="0" y="2" width="14" height="1" fill="#2f6aac"/><rect x="0" y="3" width="1" height="1" fill="#2f6aac"/><rect x="1" y="3" width="12" height="1" fill="#e6eef8"/><rect x="13" y="3" width="1" height="1" fill="#2f6aac"/><rect x="0" y="4" width="1" height="1" fill="#2f6aac"/><rect x="1" y="4" width="12" height="1" fill="#e6eef8"/><rect x="13" y="4" width="1" height="1" fill="#2f6aac"/><rect x="0" y="5" width="1" height="1" fill="#2f6aac"/><rect x="1" y="5" width="12" height="1" fill="#e6eef8"/><rect x="13" y="5" width="1" height="1" fill="#2f6aac"/><rect x="0" y="6" width="1" height="1" fill="#2f6aac"/><rect x="1" y="6" width="12" height="1" fill="#e6eef8"/><rect x="13" y="6" width="1" height="1" fill="#2f6aac"/><rect x="0" y="7" width="1" height="1" fill="#2f6aac"/><rect x="1" y="7" width="12" height="1" fill="#e6eef8"/><rect x="13" y="7" width="1" height="1" fill="#2f6aac"/><rect x="0" y="8" width="14" height="1" fill="#2f6aac"/></svg><div class="t" style="left:533px;top:563px;color:#000;">Import Registered Profile</div><div class="t" style="left:533px;top:585px;color:#000;">Import Registered Package</div><div class="t" style="left:533px;top:607px;color:#000;">Import Package From User Model</div><div style="position:absolute;left:767px;top:619px;width:190px;height:25px;background:rgba(0,0,0,.25);border-radius:3px;filter:blur(1.5px)"></div><div style="position:absolute;left:763px;top:615px;width:192px;height:25px;background:linear-gradient(#fff,#e4e5f0);border:1px solid #767676;border-radius:3px"></div><div class="t" style="left:769px;top:620px;color:#575757;">Import Registered Package</div></body></html>
